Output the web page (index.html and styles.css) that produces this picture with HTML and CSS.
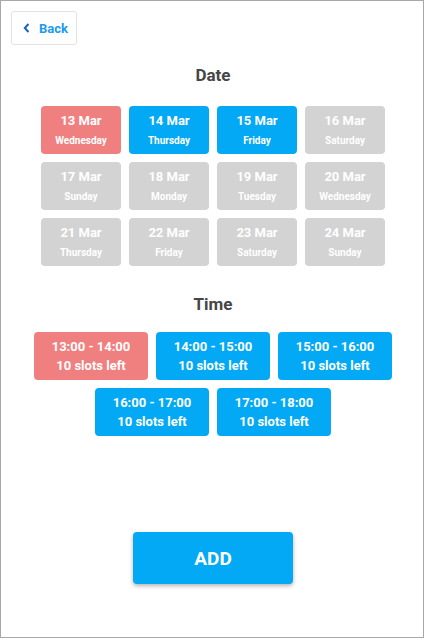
FILE: index.html
```html
<!DOCTYPE html>
<html>
<head>
<meta charset="utf-8">
<link rel="stylesheet" href="styles.css">
</head>
<body>
<div class="frame">
  <button class="back">
    <svg class="chev" width="7" height="10" viewBox="0 0 7 10"><path d="M5.5 1 L1.8 5 L5.5 9" fill="none" stroke="#1565c0" stroke-width="2"/></svg>
    <span>Back</span>
  </button>
  <main class="content">
    <h2 class="title date-title">Date</h2>
    <div class="date-grid">
      <div class="card red"><div class="d">13 Mar</div><div class="w">Wednesday</div></div>
      <div class="card blue"><div class="d">14 Mar</div><div class="w">Thursday</div></div>
      <div class="card blue"><div class="d">15 Mar</div><div class="w">Friday</div></div>
      <div class="card gray"><div class="d">16 Mar</div><div class="w">Saturday</div></div>
      <div class="card gray"><div class="d">17 Mar</div><div class="w">Sunday</div></div>
      <div class="card gray"><div class="d">18 Mar</div><div class="w">Monday</div></div>
      <div class="card gray"><div class="d">19 Mar</div><div class="w">Tuesday</div></div>
      <div class="card gray"><div class="d">20 Mar</div><div class="w">Wednesday</div></div>
      <div class="card gray"><div class="d">21 Mar</div><div class="w">Thursday</div></div>
      <div class="card gray"><div class="d">22 Mar</div><div class="w">Friday</div></div>
      <div class="card gray"><div class="d">23 Mar</div><div class="w">Saturday</div></div>
      <div class="card gray"><div class="d">24 Mar</div><div class="w">Sunday</div></div>
    </div>
    <h2 class="title time-title">Time</h2>
    <div class="time-grid">
      <div class="slot red"><div>13:00 - 14:00</div><div>10 slots left</div></div>
      <div class="slot blue"><div>14:00 - 15:00</div><div>10 slots left</div></div>
      <div class="slot blue"><div>15:00 - 16:00</div><div>10 slots left</div></div>
      <div class="slot blue"><div>16:00 - 17:00</div><div>10 slots left</div></div>
      <div class="slot blue"><div>17:00 - 18:00</div><div>10 slots left</div></div>
    </div>
    <button class="add">ADD</button>
  </main>
</div>
</body>
</html>
```
FILE: styles.css
```css
html, body {
  margin: 0;
  padding: 0;
  background: #fff;
  font-family: Roboto, "Liberation Sans", sans-serif;
}
.frame {
  box-sizing: border-box;
  height: 638px;
  border: 1px solid #a8a8a8;
  overflow: hidden;
}
.back {
  display: flex;
  align-items: center;
  box-sizing: border-box;
  margin: 10px 0 0 10px;
  width: 66px;
  height: 34px;
  padding: 0 0 0 11px;
  background: #fff;
  border: 1px solid #e2e2e2;
  border-radius: 3px;
  font-family: inherit;
  font-weight: 700;
  font-size: 13px;
  color: #1a9bec;
  cursor: pointer;
}
.back .chev {
  margin-right: 9px;
}
.content {
  display: flex;
  flex-direction: column;
  align-items: center;
  padding-left: 2px;
}
.title {
  margin: 0;
  font-size: 17px;
  line-height: 20px;
  font-weight: 700;
  color: #464646;
}
.date-title { margin-top: 20px; }
.date-grid {
  margin-top: 21px;
  display: grid;
  grid-template-columns: repeat(4, 80px);
  grid-auto-rows: 48px;
  gap: 8px;
}
.card, .slot {
  display: flex;
  flex-direction: column;
  align-items: center;
  justify-content: center;
  border-radius: 4px;
  color: #fff;
  font-weight: 700;
}
.card .d {
  font-size: 13px;
  line-height: 20px;
  margin-top: 2px;
}
.card .w {
  font-size: 10px;
  line-height: 20px;
}
.red { background: #f08080; }
.blue { background: #03a9f4; }
.gray { background: #d3d3d3; }
.time-title { margin-top: 28px; }
.time-grid {
  margin-top: 18px;
  width: 358px;
  display: flex;
  flex-wrap: wrap;
  justify-content: center;
  gap: 8px;
}
.slot {
  width: 114px;
  height: 48px;
  font-size: 13px;
  line-height: 19px;
}
.add {
  margin-top: 96px;
  width: 160px;
  height: 52px;
  border: none;
  border-radius: 4px;
  background: #03a9f4;
  color: #fff;
  font-family: inherit;
  font-weight: 700;
  font-size: 19px;
  box-shadow: 0 2px 4px rgba(0,0,0,0.3);
  cursor: pointer;
}
```
